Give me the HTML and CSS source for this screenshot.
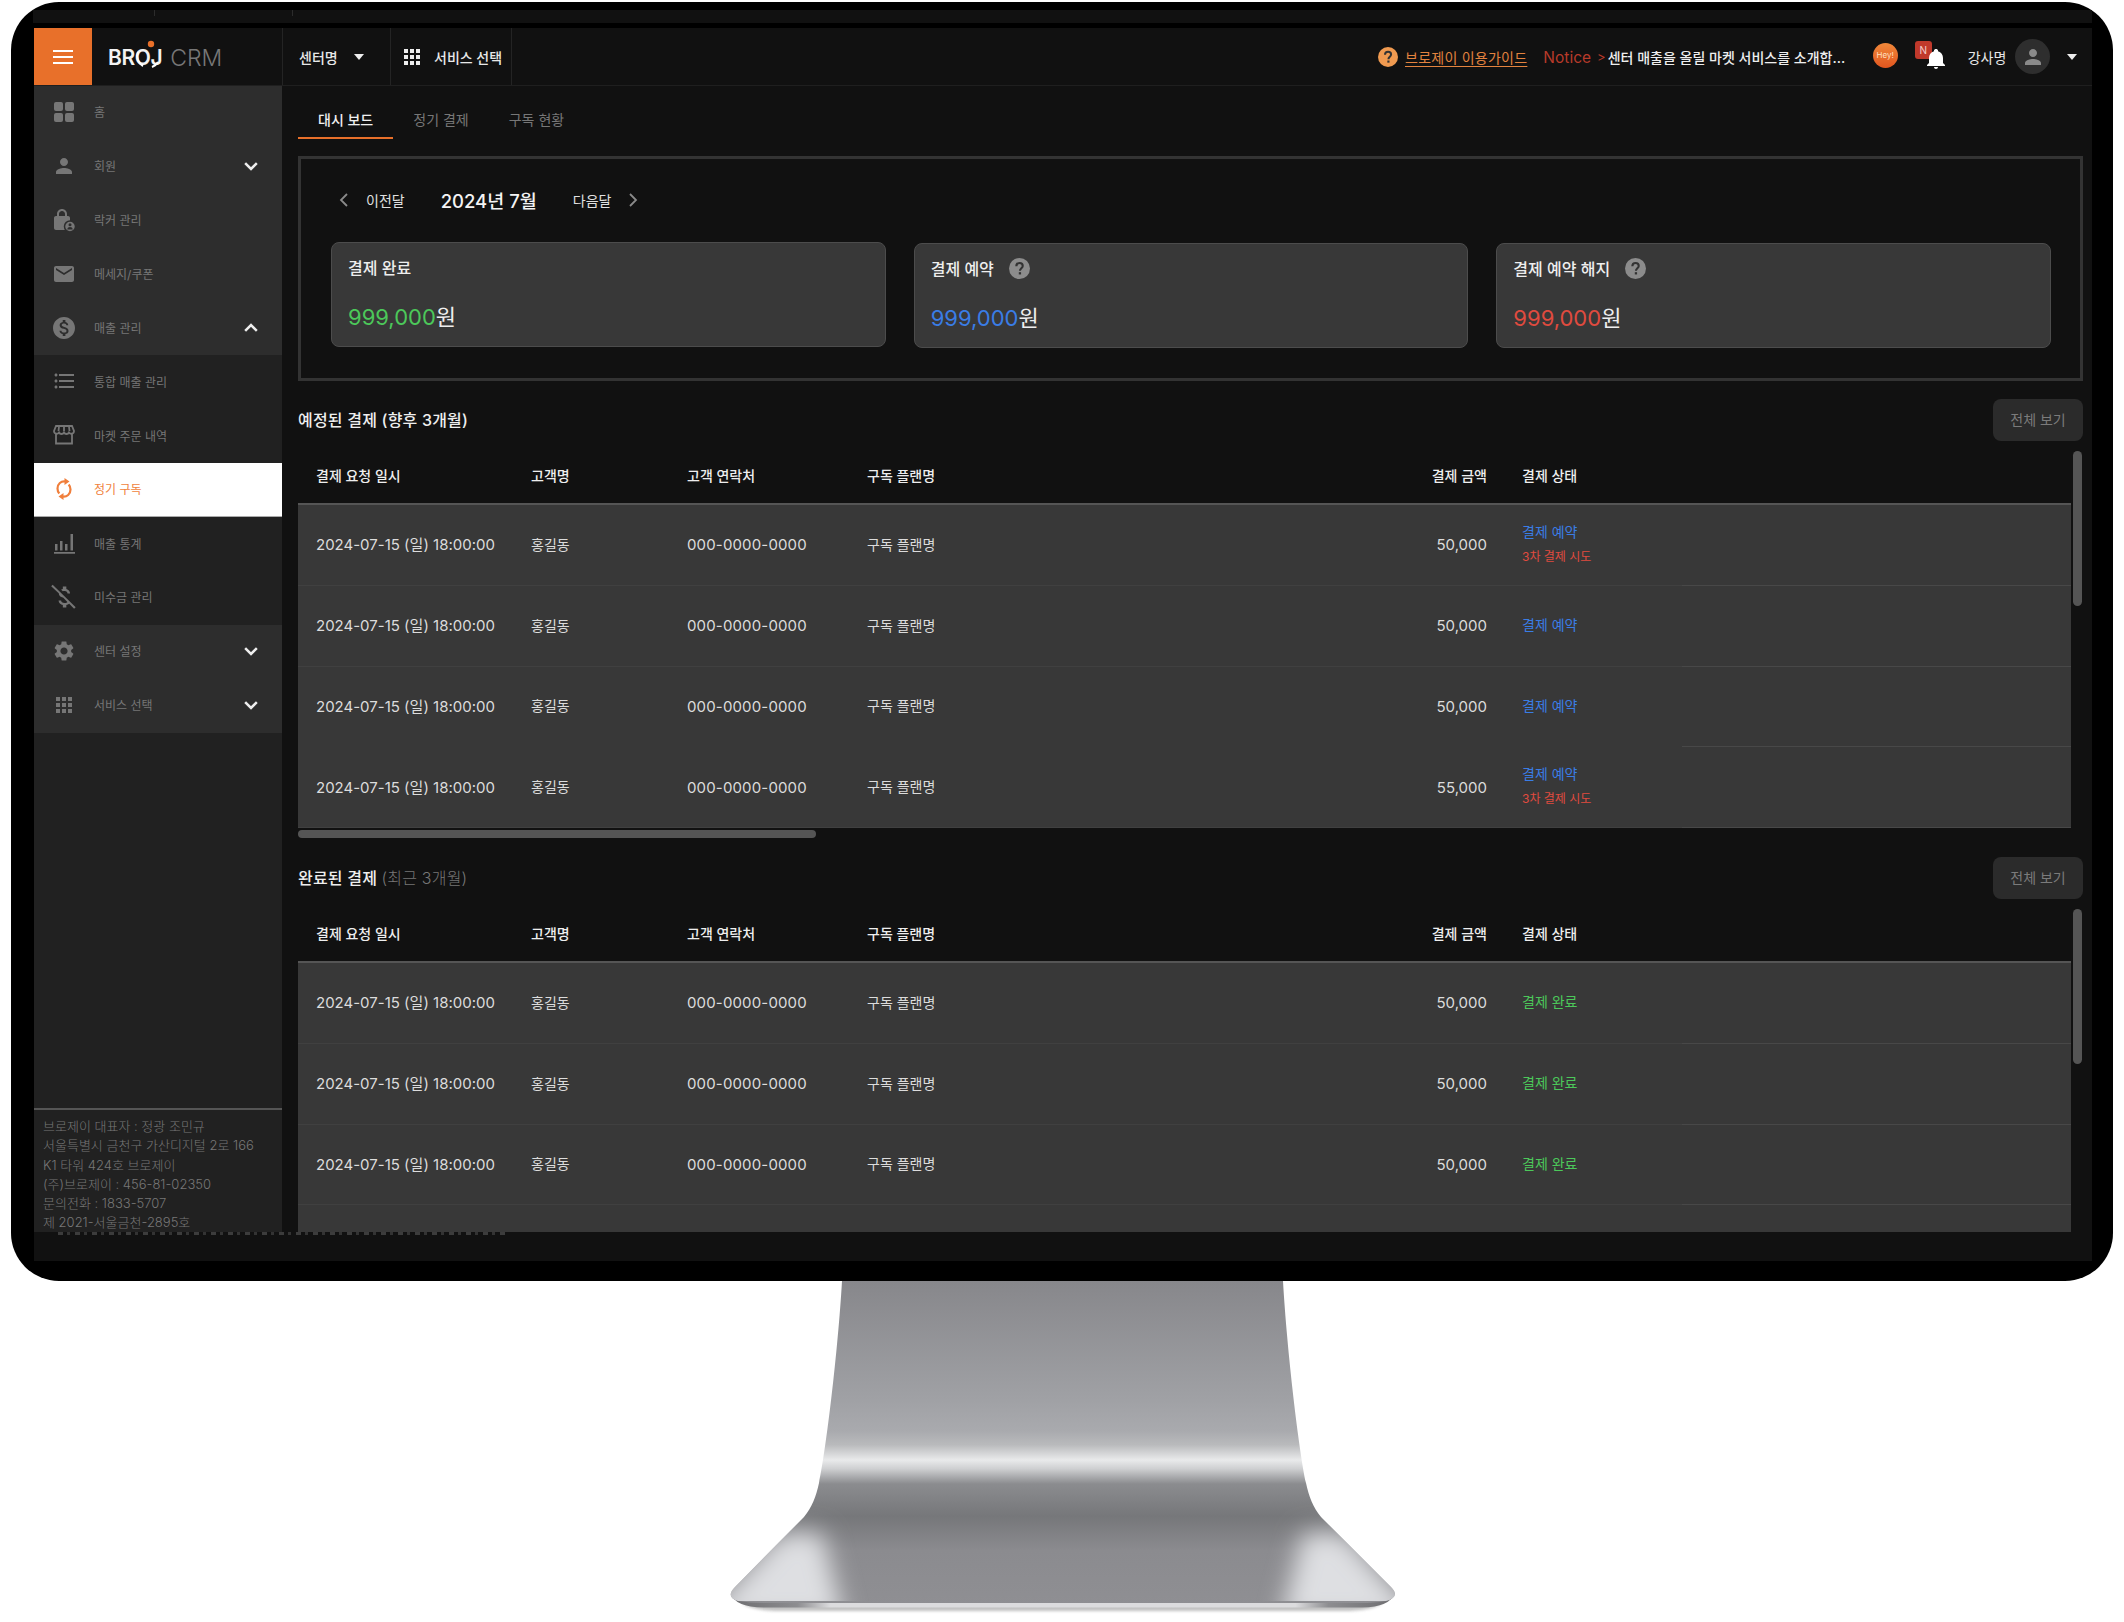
FILE: index.html
```html
<!DOCTYPE html>
<html lang="ko">
<head>
<meta charset="utf-8">
<title>BROJ CRM</title>
<link rel="stylesheet" href="styles.css">
</head>
<body>
<svg class="sprite" xmlns="http://www.w3.org/2000/svg">
  <symbol id="i-chev-down" viewBox="0 0 24 24"><path d="M5 8.5l7 7 7-7" fill="none" stroke="currentColor" stroke-width="3"/></symbol>
  <symbol id="i-chev-up" viewBox="0 0 24 24"><path d="M5 15.5l7-7 7 7" fill="none" stroke="currentColor" stroke-width="3"/></symbol>
  <symbol id="i-apps" viewBox="0 0 24 24"><path fill="currentColor" d="M4 8h4V4H4v4zm6 12h4v-4h-4v4zm-6 0h4v-4H4v4zm0-6h4v-4H4v4zm6 0h4v-4h-4v4zm6-10v4h4V4h-4zm-6 4h4V4h-4v4zm6 6h4v-4h-4v4zm0 6h4v-4h-4v4z"/></symbol>
  <symbol id="i-help" viewBox="0 0 24 24"><circle cx="12" cy="12" r="12" fill="currentColor"/><path d="M8.4 9.4c0-2.2 1.6-3.7 3.7-3.7s3.6 1.4 3.6 3.3c0 2.6-3.2 2.9-3.2 5.6" fill="none" stroke="#333" stroke-width="2.4"/><rect x="11.2" y="16.2" width="2.6" height="2.6" fill="#333"/></symbol>
</svg>

<div class="monitor">
  <div class="bezel-strip"><i class="tick tick-a"></i><i class="tick tick-b"></i></div>
  <div class="screen">
    <header class="topbar">
      <div class="menu-btn"><span></span><span></span><span></span></div>
      <div class="logo">
        <span class="logo-mark">BROJ<svg class="logo-ring" viewBox="0 0 30 30"><path d="M4 12a11 11 0 0 0 5 14M18 27a11 11 0 0 0 6-5" fill="none" stroke="#fff" stroke-width="2"/><circle cx="17" cy="4" r="3.200" fill="#e8702a"/></svg></span>
        <span class="logo-crm">CRM</span>
      </div>
      <div class="top-cell top-center"><span>센터명</span><i class="caret"></i></div>
      <div class="top-cell top-service"><svg class="ico-grid"><use href="#i-apps"/></svg><span>서비스 선택</span></div>
      <div class="top-right">
        <svg class="guide-ico"><use href="#i-help"/></svg>
        <a class="guide-link">브로제이 이용가이드</a>
        <span class="notice-label">Notice</span>
        <span class="notice-arrow">&gt;</span>
        <span class="notice-text">센터 매출을 올릴 마켓 서비스를 소개합...</span>
        <span class="hey">Hey!</span>
        <span class="bell-wrap">
          <span class="badge-n">N</span>
          <svg class="bell" viewBox="0 0 24 24"><path fill="#fff" d="M12 22c1.100 0 2-.9 2-2h-4c0 1.100.9 2 2 2zm7-6v-5c0-3.300-1.800-6-5-6.800V3.500c0-.9-.9-1.500-2-1.500s-2 .6-2 1.500v.7C6.800 5 5 7.700 5 11v5l-2 2v1h18v-1l-2-2z"/></svg>
        </span>
        <span class="user-name">강사명</span>
        <span class="avatar"><svg viewBox="0 0 24 24"><path fill="#8a8a8a" d="M12 12c2.210 0 4-1.790 4-4s-1.790-4-4-4-4 1.790-4 4 1.790 4 4 4zm0 2c-2.670 0-8 1.340-8 4v2h16v-2c0-2.660-5.330-4-8-4z"/></svg></span>
        <i class="caret caret-user"></i>
      </div>
    </header>

    <div class="workspace">
      <aside class="sidebar">
        <nav class="side-nav">
          <a class="side-item top"><svg viewBox="0 0 24 24"><rect x="2" y="2" width="9" height="9" rx="2" fill="currentColor"/><rect x="13" y="2" width="9" height="9" rx="2" fill="currentColor"/><rect x="2" y="13" width="9" height="9" rx="2" fill="currentColor"/><rect x="13" y="13" width="9" height="9" rx="2" fill="currentColor"/></svg><span>홈</span></a>
          <a class="side-item top"><svg viewBox="0 0 24 24"><path fill="currentColor" d="M12 12c2.210 0 4-1.790 4-4s-1.790-4-4-4-4 1.790-4 4 1.790 4 4 4zm0 2c-2.670 0-8 1.340-8 4v2h16v-2c0-2.660-5.330-4-8-4z"/></svg><span>회원</span><svg class="chev"><use href="#i-chev-down"/></svg></a>
          <a class="side-item top"><svg viewBox="0 0 24 24"><path fill="currentColor" d="M16 8h-1V6c0-2.760-2.240-5-5-5S5 3.240 5 6v2H4c-1.100 0-2 .9-2 2v10c0 1.100.9 2 2 2h12c1.100 0 2-.9 2-2V10c0-1.100-.9-2-2-2zM7 6c0-1.660 1.340-3 3-3s3 1.340 3 3v2H7V6z"/><circle cx="18" cy="18.500" r="5.500" fill="currentColor" stroke="#2d2d2d" stroke-width="1.500"/><circle cx="18" cy="16.800" r="1.500" fill="#2d2d2d"/><path d="M15.300 21.500c0-1.700 1.300-2.500 2.700-2.500s2.700.8 2.700 2.500z" fill="#2d2d2d"/></svg><span>락커 관리</span></a>
          <a class="side-item top"><svg viewBox="0 0 24 24"><path fill="currentColor" d="M20 4H4c-1.100 0-2 .9-2 2v12c0 1.100.9 2 2 2h16c1.100 0 2-.9 2-2V6c0-1.100-.9-2-2-2zm0 4l-8 5-8-5V6l8 5 8-5v2z"/></svg><span>메세지/쿠폰</span></a>
          <a class="side-item top"><svg viewBox="0 0 24 24"><path fill="currentColor" d="M12 1C5.930 1 1 5.930 1 12s4.930 11 11 11 11-4.930 11-11S18.070 1 12 1zm1.410 17.090V20h-2.670v-1.930c-1.710-.36-3.160-1.460-3.270-3.400h1.960c.1 1.050.82 1.870 2.650 1.870 1.960 0 2.400-.98 2.400-1.590 0-.83-.44-1.610-2.670-2.140-2.480-.6-4.180-1.620-4.180-3.670 0-1.720 1.390-2.840 3.110-3.210V4h2.670v1.950c1.860.45 2.790 1.860 2.850 3.390H14.300c-.05-1.110-.64-1.870-2.220-1.870-1.500 0-2.400.68-2.400 1.640 0 .84.65 1.390 2.670 1.910s4.180 1.390 4.180 3.910c-.01 1.830-1.380 2.830-3.120 3.160z"/></svg><span>매출 관리</span><svg class="chev"><use href="#i-chev-up"/></svg></a>
          <a class="side-item"><svg viewBox="0 0 24 24"><path fill="currentColor" d="M4 10.500c-.83 0-1.500.67-1.500 1.500s.67 1.500 1.500 1.500 1.500-.67 1.500-1.500-.67-1.500-1.500-1.500zm0-6c-.83 0-1.500.67-1.500 1.500S3.170 7.500 4 7.500 5.500 6.830 5.500 6 4.830 4.500 4 4.500zm0 12c-.83 0-1.500.68-1.500 1.500s.68 1.500 1.500 1.500 1.500-.68 1.500-1.500-.67-1.500-1.500-1.500zM7 19h15v-2H7v2zm0-6h15v-2H7v2zm0-8v2h15V5H7z"/></svg><span>통합 매출 관리</span></a>
          <a class="side-item"><svg viewBox="0 0 24 24"><path d="M4 10v10.500h16V10M2 8l2-5h16l2 5c0 3-3.500 3.500-5 1.500-1 2-4 2-5 0-1 2-4 2-5 0C5.500 11.500 2 11 2 8zM7 3.500L6.500 8M12 3.500V8M17 3.500l.5 4.500" fill="none" stroke="currentColor" stroke-width="1.800"/></svg><span>마켓 주문 내역</span></a>
          <a class="side-item active"><svg viewBox="0 0 24 24"><path fill="none" stroke="currentColor" stroke-width="2.200" d="M13.500 4.500C9 3.700 5.500 7 5.500 11.500c0 2 .7 3.700 1.800 5M10.500 19.500c4.500.8 8-2.500 8-7 0-2-.7-3.700-1.800-5"/><path fill="currentColor" d="M12.500 1l5 3.500-5 3.500zM11.500 16l-5 3.500 5 3.500z"/></svg><span>정기 구독</span></a>
          <a class="side-item"><svg viewBox="0 0 24 24"><path fill="currentColor" d="M2 21h21v1.800H2zM3 13h2.500v6.500H3zM8 10h2.500v9.500H8zM13 13h2.500v6.500H13zM18.500 3H21v16.500h-2.500z"/></svg><span>매출 통계</span></a>
          <a class="side-item"><svg class="ico-lg" viewBox="0 0 24 24"><path fill="currentColor" d="M12.500 6.900c1.780 0 2.440.85 2.500 2.100h2.210c-.07-1.720-1.120-3.300-3.210-3.810V3h-3v2.160c-.53.12-1.030.3-1.480.54l1.470 1.470c.41-.17.91-.27 1.510-.27zM2.300 1.500L1 2.800l6.500 6c0 2.080 1.560 3.210 3.910 3.910l3.510 3.510c-.34.48-1.050.91-2.420.91-2.060 0-2.870-.92-2.980-2.100h-2.200c.12 2.190 1.760 3.420 3.680 3.830V21h3v-2.150c.96-.18 1.820-.55 2.450-1.120l4.200 4.300 1.350-1.300L2.300 1.500z"/></svg><span>미수금 관리</span></a>
          <a class="side-item top"><svg viewBox="0 0 24 24"><path fill="currentColor" d="M19.140 12.940c.04-.3.06-.61.06-.94 0-.32-.02-.64-.07-.94l2.030-1.580c.18-.14.23-.41.12-.61l-1.920-3.320c-.12-.22-.37-.29-.59-.22l-2.390.96c-.5-.38-1.030-.7-1.620-.94l-.36-2.540c-.04-.24-.24-.41-.48-.41h-3.840c-.24 0-.43.17-.47.41l-.36 2.540c-.59.24-1.130.57-1.620.94l-2.390-.96c-.22-.08-.47 0-.59.22L2.740 8.870c-.12.21-.08.47.12.61l2.030 1.580c-.05.3-.09.63-.09.94s.02.64.07.94l-2.030 1.580c-.18.14-.23.41-.12.61l1.920 3.320c.12.22.37.29.59.22l2.390-.96c.5.38 1.030.7 1.620.94l.36 2.54c.05.24.24.41.48.41h3.840c.24 0 .44-.17.47-.41l.36-2.540c.59-.24 1.130-.56 1.620-.94l2.390.96c.22.08.47 0 .59-.22l1.920-3.320c.12-.22.07-.47-.12-.61l-2.010-1.580zM12 15.600c-1.980 0-3.600-1.620-3.600-3.600s1.620-3.600 3.600-3.600 3.600 1.620 3.600 3.600-1.620 3.600-3.600 3.600z"/></svg><span>센터 설정</span><svg class="chev"><use href="#i-chev-down"/></svg></a>
          <a class="side-item top"><svg><use href="#i-apps"/></svg><span>서비스 선택</span><svg class="chev"><use href="#i-chev-down"/></svg></a>
        </nav>
        <footer class="side-foot">
          <p>브로제이 대표자 : 정광 조민규</p>
          <p>서울특별시 금천구 가산디지털 2로 166</p>
          <p>K1 타워 424호 브로제이</p>
          <p>(주)브로제이 : 456-81-02350</p>
          <p>문의전화 : 1833-5707</p>
          <p>제 2021-서울금천-2895호</p>
        </footer>
      </aside>

      <main class="main">
        <div class="tabs">
          <a class="tab on">대시 보드</a>
          <a class="tab">정기 결제</a>
          <a class="tab">구독 현황</a>
        </div>

        <section class="panel">
          <div class="month-nav">
            <a class="month-btn"><svg class="arrow" viewBox="0 0 10 16"><path d="M8 2L2 8l6 6" fill="none" stroke="#8a8a8a" stroke-width="1.800"/></svg><span>이전달</span></a>
            <strong class="month-title">2024년 7월</strong>
            <a class="month-btn"><span>다음달</span><svg class="arrow" viewBox="0 0 10 16"><path d="M2 2l6 6-6 6" fill="none" stroke="#8a8a8a" stroke-width="1.800"/></svg></a>
          </div>
          <div class="cards">
            <div class="card card-first">
              <div class="card-title">결제 완료</div>
              <div class="card-value"><span class="c-green">999,000</span>원</div>
            </div>
            <div class="card">
              <div class="card-title">결제 예약<svg class="card-help"><use href="#i-help"/></svg></div>
              <div class="card-value"><span class="c-blue">999,000</span>원</div>
            </div>
            <div class="card">
              <div class="card-title">결제 예약 해지<svg class="card-help"><use href="#i-help"/></svg></div>
              <div class="card-value"><span class="c-red">999,000</span>원</div>
            </div>
          </div>
        </section>

        <section class="list">
          <div class="list-head">
            <h2 class="list-title">예정된 결제 (향후 3개월)</h2>
            <button class="view-all">전체 보기</button>
          </div>
          <div class="table">
            <div class="row head"><div>결제 요청 일시</div><div>고객명</div><div>고객 연락처</div><div>구독 플랜명</div><div class="num">결제 금액</div><div>결제 상태</div><div></div></div>
            <div class="row"><div>2024-07-15 (일) 18:00:00</div><div>홍길동</div><div>000-0000-0000</div><div>구독 플랜명</div><div class="num">50,000</div><div class="status"><span class="c-blue">결제 예약</span><small class="c-red">3차 결제 시도</small></div><div></div></div>
            <div class="row"><div>2024-07-15 (일) 18:00:00</div><div>홍길동</div><div>000-0000-0000</div><div>구독 플랜명</div><div class="num">50,000</div><div class="status"><span class="c-blue">결제 예약</span></div><div></div></div>
            <div class="row row-noline"><div>2024-07-15 (일) 18:00:00</div><div>홍길동</div><div>000-0000-0000</div><div>구독 플랜명</div><div class="num">50,000</div><div class="status"><span class="c-blue">결제 예약</span></div><div></div></div>
            <div class="row"><div>2024-07-15 (일) 18:00:00</div><div>홍길동</div><div>000-0000-0000</div><div>구독 플랜명</div><div class="num">55,000</div><div class="status"><span class="c-blue">결제 예약</span><small class="c-red">3차 결제 시도</small></div><div></div></div>
            <i class="thumb-v"></i>
            <i class="thumb-h"></i>
          </div>
        </section>

        <section class="list">
          <div class="list-head">
            <h2 class="list-title">완료된 결제 <span class="muted">(최근 3개월)</span></h2>
            <button class="view-all">전체 보기</button>
          </div>
          <div class="table">
            <div class="row head"><div>결제 요청 일시</div><div>고객명</div><div>고객 연락처</div><div>구독 플랜명</div><div class="num">결제 금액</div><div>결제 상태</div><div></div></div>
            <div class="row"><div>2024-07-15 (일) 18:00:00</div><div>홍길동</div><div>000-0000-0000</div><div>구독 플랜명</div><div class="num">50,000</div><div class="status"><span class="c-green">결제 완료</span></div><div></div></div>
            <div class="row"><div>2024-07-15 (일) 18:00:00</div><div>홍길동</div><div>000-0000-0000</div><div>구독 플랜명</div><div class="num">50,000</div><div class="status"><span class="c-green">결제 완료</span></div><div></div></div>
            <div class="row"><div>2024-07-15 (일) 18:00:00</div><div>홍길동</div><div>000-0000-0000</div><div>구독 플랜명</div><div class="num">50,000</div><div class="status"><span class="c-green">결제 완료</span></div><div></div></div>
            <div class="row"><div></div><div></div><div></div><div></div><div></div><div></div><div></div></div>
            <i class="thumb-v"></i>
          </div>
        </section>
      </main>
    </div>
    <div class="screen-foot"><i class="foot-residue"></i></div>
  </div>
</div>

<svg class="stand" viewBox="0 0 680 341" xmlns="http://www.w3.org/2000/svg">
  <defs>
    <linearGradient id="metal" x1="0" y1="0" x2="0" y2="341" gradientUnits="userSpaceOnUse">
      <stop offset="0" stop-color="#87878b"/>
      <stop offset=".35" stop-color="#a0a1a5"/>
      <stop offset=".44" stop-color="#a9aaae"/>
      <stop offset=".48" stop-color="#b9babc"/>
      <stop offset=".525" stop-color="#e9eaeb"/>
      <stop offset=".55" stop-color="#cfd0d2"/>
      <stop offset=".595" stop-color="#8b8c8f"/>
      <stop offset=".69" stop-color="#76777a"/>
      <stop offset=".79" stop-color="#8b8b8f"/>
      <stop offset="1" stop-color="#909094"/>
    </linearGradient>
    <linearGradient id="rim" x1="0" y1="0" x2="1" y2="0">
      <stop offset="0" stop-color="#6d6d70"/>
      <stop offset=".1" stop-color="#8d8d90"/>
      <stop offset=".15" stop-color="#dcdcde"/>
      <stop offset=".85" stop-color="#dcdcde"/>
      <stop offset=".9" stop-color="#8d8d90"/>
      <stop offset="1" stop-color="#6d6d70"/>
    </linearGradient>
    <clipPath id="foot-clip"><path d="M120 0H561C565 70 577 170 584 202C587 216 591 226 599 236L669 306Q679 316 664 320H16Q3 316 13 306L82 236C90 226 94 216 97 202C104 170 116 70 120 0Z"/></clipPath>
    <filter id="soft" x="-40%" y="-40%" width="180%" height="180%"><feGaussianBlur stdDeviation="12"/></filter>
    <filter id="shadow" x="-5%" y="-200%" width="110%" height="500%"><feGaussianBlur stdDeviation="1.500"/></filter>
  </defs>
  <path class="stand-shadow" d="M20 322H660Q650 330 620 330H60Q30 330 20 322Z" fill="#777" opacity=".45" filter="url(#shadow)"/>
  <path d="M9 312Q12 326 42 326.500H640Q668 326 673 312Z" fill="url(#rim)"/>
  <path d="M120 0H561C565 70 577 170 584 202C587 216 591 226 599 236L669 306Q679 316 664 320Q650 322 640 322H42Q28 322 16 320Q3 316 13 306L82 236C90 226 94 216 97 202C104 170 116 70 120 0Z" fill="url(#metal)"/>
  <g clip-path="url(#foot-clip)">
    <polygon points="60,252 100,252 122,340 -20,340" fill="#dedfe2" filter="url(#soft)"/>
    <polygon points="621,252 581,252 559,340 700,340" fill="#dedfe2" filter="url(#soft)"/>
  </g>
</svg>
</body>
</html>
```

FILE: styles.css
```css
* { box-sizing: border-box; }
html, body { margin: 0; padding: 0; background: #fff; }
body {
  width: 2124px;
  height: 1622px;
  overflow: hidden;
  font-family: "Inter", "Noto Sans CJK KR", "Noto Sans", sans-serif;
  font-size: 14px;
  color: #e8e8e8;
}
a { color: inherit; text-decoration: none; }
p, h2 { margin: 0; }
.sprite { display: none; }

/* monitor */
.monitor {
  margin: 2px 11px 0;
  height: 1279px;
  padding: 8px 21px 20px 23px;
  background: #000;
  border-radius: 48px;
}
.bezel-strip {
  position: relative;
  height: 13px;
  margin: 0 0 5px -1px;
  background: #111;
}
.tick { position: absolute; top: 0; width: 1px; height: 6px; background: #2c2c2c; }
.tick-a { left: 121px; }
.tick-b { left: 259px; }
.screen { display: flex; flex-direction: column; height: 1233px; background: #111; }

/* topbar */
.topbar { display: flex; align-items: stretch; height: 58px; flex: none; background: #111; border-bottom: 1px solid #1f1f1f; }
.menu-btn {
  display: flex; flex-direction: column; justify-content: center; gap: 4px;
  width: 58px; padding: 0 19px; background: #e8702a;
}
.menu-btn span { display: block; height: 2px; background: #fff; }
.logo { display: flex; align-items: center; gap: 8px; width: 190px; padding: 2px 0 0 16px; }
.logo-mark { position: relative; font-size: 21px; font-weight: 600; letter-spacing: -.4px; color: #f2f2f2; }
.logo-ring { position: absolute; left: 26px; top: -5px; width: 30px; height: 30px; }
.logo-crm { font-size: 23px; font-weight: 300; color: #777; }
.top-cell {
  display: flex; align-items: center;
  border-left: 1px solid #242424;
  font-weight: 500; color: #e8e8e8;
}
.top-center { width: 108px; padding-left: 16px; gap: 16px; }
.top-service { width: 122px; padding-left: 12px; gap: 10px; border-right: 1px solid #242424; }
.ico-grid { width: 24px; height: 24px; color: #eee; margin-left: -3px; }
.caret { display: block; width: 0; height: 0; border: 5px solid transparent; border-top: 6px solid #eee; border-bottom: 0; }
.top-right { flex: 1; display: flex; align-items: center; }
.guide-ico { width: 20px; height: 20px; margin-left: 866px; color: #f09a50; }
.guide-link { margin-left: 7px; color: #e3833f; letter-spacing: .25px; text-decoration: underline; text-underline-offset: 3px; }
.notice-label { margin-left: 16px; padding-top: 2px; color: #b83a2a; font-size: 15.5px; }
.notice-arrow { margin-left: 6px; color: #b83a2a; font-size: 13px; }
.notice-text { margin-left: 2px; width: 243px; font-weight: 500; color: #eee; white-space: nowrap; }
.hey {
  display: flex; align-items: center; justify-content: center;
  width: 25px; height: 25px; margin-left: 22px; margin-top: -3px;
  border-radius: 50%;
  background: linear-gradient(180deg, #f0883a, #e2561f);
  font-size: 8px; color: #ffe0c0;
}
.bell-wrap { position: relative; display: block; width: 31px; height: 30px; margin-left: 17px; }
.badge-n {
  position: absolute; left: 0; top: -1px;
  display: flex; align-items: center; justify-content: center;
  width: 17px; height: 18px; border-radius: 3px;
  background: #c0392b; color: #f4d0cc; font-size: 10px;
}
.bell { position: absolute; left: 9px; top: 5px; width: 24px; height: 24px; }
.user-name { margin-left: 22px; color: #e8e8e8; }
.avatar { display: flex; align-items: center; justify-content: center; width: 35px; height: 35px; margin-left: 9px; border-radius: 50%; background: #2e2e2e; }
.avatar svg { width: 24px; height: 24px; }
.caret-user { margin-left: 17px; }

/* layout */
.workspace { flex: 1; min-height: 0; display: flex; overflow: hidden; }
.sidebar { display: flex; flex-direction: column; width: 248px; flex: none; background: #212121; }
.side-nav { display: flex; flex-direction: column; }
.side-item {
  display: flex; align-items: center; gap: 18px;
  height: 53.9px; padding-left: 18px; padding-right: 21px;
  color: #767676; font-size: 12px;
}
.side-item span { position: relative; top: -1px; }
.side-item.top { background: #2d2d2d; }
.side-item > svg:first-child { width: 24px; height: 24px; flex: none; position: relative; top: -1px; }
.side-item > svg.ico-lg { width: 28px; height: 28px; margin: 0 -2px; }
.side-item.active { background: #fff; color: #f07f3c; border-bottom: 1px solid #aaa; }
.chev { width: 20px; height: 20px; margin-left: auto; color: #eee; position: relative; top: -1px; }
.side-foot {
  margin-top: auto;
  height: 124px;
  padding: 7px 9px 0;
  border-top: 2px solid #555;
  overflow: hidden;
  font-size: 13px; line-height: 19.3px; font-weight: 300; color: #777;
  white-space: nowrap;
}
.main { flex: 1; min-width: 0; padding: 0 9px 0 16px; overflow: hidden; background: #111; }
.screen-foot { flex: none; height: 29px; padding-left: 24px; background: #111; }
.foot-residue {
  display: block; width: 447px; height: 3px;
  background: repeating-linear-gradient(90deg, #3c3c3c 0 5px, transparent 5px 9px, #333 9px 12px, transparent 12px 17px);
}

/* tabs */
.tabs { display: flex; padding-top: 23px; }
.tab {
  height: 30px; padding: 0 20px; line-height: 22px;
  border-bottom: 2px solid transparent;
  color: #777;
}
.tab.on { color: #f0f0f0; font-weight: 500; border-bottom-color: #e8702a; }

/* panel */
.panel { height: 225px; margin-top: 17px; padding: 23px 29px 0 30px; border: 3px solid #333; }
.month-nav { display: flex; align-items: center; gap: 36px; height: 36px; padding-left: 8px; margin-bottom: 24px; }
.month-btn { display: flex; align-items: center; gap: 17px; color: #e0e0e0; font-size: 14px; }
.arrow { width: 10px; height: 16px; }
.month-title { font-size: 18.5px; font-weight: 500; color: #f4f4f4; }
.cards { display: flex; gap: 28px; }
.card {
  flex: 1; height: 105px; margin-top: 1px; padding: 12px 16px 0;
  background: #383838; border: 1px solid #4c4c4c; border-radius: 8px;
}
.card-first { margin-top: 0; }
.card-title { display: flex; align-items: center; height: 24px; font-size: 16px; font-weight: 500; color: #eee; }
.card-help { width: 21px; height: 21px; margin-left: 15px; color: #8c8c8c; }
.card-value { margin-top: 22px; font-size: 22px; line-height: 32px; font-weight: 400; color: #eee; }
.c-green { color: #4cc85a; }
.c-blue { color: #3a7de6; }
.c-red { color: #e04b3f; }

/* lists */
.list { margin-top: 17px; }
.list + .list { margin-top: 18px; }
.list-head { display: flex; align-items: center; justify-content: space-between; height: 43px; }
.list-title { font-size: 16px; font-weight: 500; letter-spacing: .2px; color: #eee; position: relative; top: -1px; }
.muted { font-weight: 300; color: #777; }
.view-all {
  width: 90px; height: 42px; padding: 0 0 2px; border: 0; border-radius: 8px;
  background: #2b2b2b; color: #7b7b7b;
  font-family: inherit; font-size: 14px;
}
.table { position: relative; width: 1773px; padding-bottom: 10px; }
.row {
  display: grid;
  grid-template-columns: 233px 156px 180px 493px 127px 195px 389px;
  height: 80.75px;
  background: #383838;
  color: #dcdcdc;
}
.row > div {
  display: flex; align-items: center;
  padding-bottom: 2px;
  border-bottom: 1px solid #404040;
  min-width: 0;
  white-space: nowrap;
}
.row:not(.head) > div:nth-child(1),
.row:not(.head) > div:nth-child(3),
.row:not(.head) > div:nth-child(5) { font-size: 15px; }
.row:not(.head) > div:nth-child(3) { padding-bottom: 0; letter-spacing: .15px; }
.row:not(.head) > div:nth-child(5) { padding-bottom: 0; }
.row > div:first-child { padding-left: 18px; }
.row > div:last-child { border-bottom-color: #484848; }
.row-noline > div:not(:last-child) { border-bottom-color: #383838; }
.row > .num { justify-content: flex-end; }
.row > .status { flex-direction: column; align-items: flex-start; justify-content: center; gap: 6px; padding-left: 35px; }
.status span { font-size: 14px; line-height: 19px; }
.status small { font-size: 12px; line-height: 19px; }
.row.head { height: 64px; padding-top: 7px; background: #111; color: #eee; font-weight: 500; }
.row.head > div { padding-bottom: 1px; border-bottom: 2px solid #555; }
.row.head > div:nth-child(6) { padding-left: 35px; }
.thumb-v { position: absolute; right: -11px; top: 10px; width: 9px; height: 155px; border-radius: 5px; background: #555; }
.thumb-h { position: absolute; left: 0; bottom: 0; width: 518px; height: 8px; border-radius: 4px; background: #555; }

/* stand */
.stand { display: block; width: 680px; height: 341px; margin: 0 auto; }
```
